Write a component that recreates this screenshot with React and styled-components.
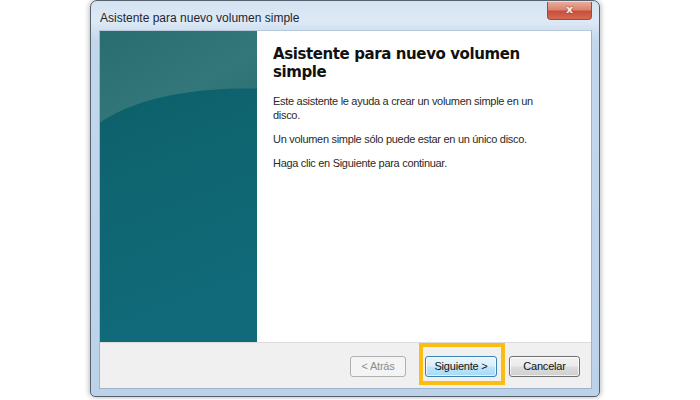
import React from "react";
import styled, { createGlobalStyle } from "styled-components";

const GlobalStyle = createGlobalStyle`
  html, body {
    margin: 0;
    padding: 0;
    background: #ffffff;
  }
  body {
    font-family: "Liberation Sans", Arial, sans-serif;
  }
`;

const Page = styled.div`
  width: 700px;
  height: 400px;
  padding-left: 90px;
  box-sizing: border-box;
  overflow: hidden;
`;

const Window = styled.div`
  width: 510px;
  height: 397px;
  box-sizing: border-box;
  border: 1px solid #56616d;
  border-radius: 7px 7px 5px 5px;
  background: linear-gradient(180deg, #d4e3f2 0px, #dde9f5 20px, #c3d7ec 40px, #bcd2e9 100%);
  box-shadow: -2px 0 4px rgba(0, 0, 0, 0.18), 2px 0 4px rgba(0, 0, 0, 0.18);
  padding: 0 7px 7px 8px;
  display: flex;
  flex-direction: column;
`;

const TitleBar = styled.div`
  height: 29px;
  display: flex;
  align-items: flex-start;
  flex-shrink: 0;
`;

const Title = styled.div`
  font-size: 12px;
  color: #1e2530;
  line-height: 14px;
  padding: 10px 0 0 1px;
`;

const CloseButton = styled.div`
  margin-left: auto;
  margin-top: 1px;
  width: 45px;
  height: 18px;
  box-sizing: border-box;
  border: 1px solid #9a4a3e;
  border-top: none;
  border-radius: 0 0 4px 4px;
  background: linear-gradient(180deg, #e8ab9b 0%, #dc8470 45%, #c9503b 55%, #d46a52 100%);
  color: #fbeeea;
  font-family: "DejaVu Sans", sans-serif;
  font-weight: bold;
  font-size: 11px;
  line-height: 15px;
  text-align: center;
  text-shadow: 0 0 2px rgba(120, 30, 20, 0.7);
`;

const Client = styled.div`
  flex: 1;
  display: flex;
  flex-direction: column;
  background: #ffffff;
  border: 1px solid #9eb4ca;
  border-top-color: #b7c9da;
  min-height: 0;
`;

const Main = styled.div`
  flex: 1;
  display: flex;
  min-height: 0;
`;

const SidePanel = styled.div`
  width: 157px;
  flex-shrink: 0;
  display: flex;
`;

const Content = styled.div`
  flex: 1;
  padding: 14px 16px 0 16px;
`;

const Heading = styled.h1`
  margin: 0;
  font-family: "DejaVu Sans", Verdana, sans-serif;
  font-weight: bold;
  font-size: 15px;
  letter-spacing: -0.4px;
  line-height: 18px;
  color: #111111;
  width: 270px;
`;

const Paragraph = styled.p`
  margin: ${(p) => (p.$first ? "13px" : "10px")} 0 0 0;
  font-size: 11px;
  letter-spacing: -0.3px;
  line-height: 14px;
  color: #2a2a2a;
  width: 270px;
`;

const Footer = styled.div`
  height: 46px;
  flex-shrink: 0;
  box-sizing: border-box;
  background: #f0f0f0;
  border-top: 1px solid #dcdcdc;
  display: flex;
  justify-content: flex-end;
  align-items: flex-end;
  padding: 0 11px 3px 0;
`;

const Button = styled.div`
  height: 21px;
  width: ${(p) => p.$w}px;
  box-sizing: border-box;
  border: 1px solid ${(p) => (p.$disabled ? "#adb2b5" : p.$focused ? "#3c7fb1" : "#707070")};
  border-radius: 3px;
  background: ${(p) =>
    p.$disabled
      ? "#f4f4f4"
      : p.$focused
      ? "linear-gradient(180deg, #eaf6fd 0%, #d9f0fc 48%, #bee6fd 52%, #a7d9f5 100%)"
      : "linear-gradient(180deg, #f2f2f2 0%, #ebebeb 48%, #dddddd 52%, #cfcfcf 100%)"};
  box-shadow: inset 0 0 0 1px ${(p) => (p.$disabled ? "#f4f4f4" : "rgba(255,255,255,0.7)")};
  color: ${(p) => (p.$disabled ? "#8d8d8d" : "#111111")};
  font-size: 11px;
  letter-spacing: -0.2px;
  line-height: 19px;
  text-align: center;
  margin-bottom: ${(p) => (p.$inside ? 0 : 8)}px;
`;

const Highlight = styled.div`
  border: 4px solid #fbbd14;
  padding: 9px 4px 4px 2px;
  margin: 0 4px 0 13px;
`;

function TealArt() {
  return (
    <svg width="100%" height="100%" viewBox="0 0 157 313" preserveAspectRatio="none">
      <defs>
        <linearGradient id="low" x1="0" y1="0" x2="0.2" y2="1">
          <stop offset="0" stopColor="#0b5c66" />
          <stop offset="0.5" stopColor="#0f6570" />
          <stop offset="1" stopColor="#116a7a" />
        </linearGradient>
        <linearGradient id="up" x1="0" y1="0" x2="1" y2="1">
          <stop offset="0" stopColor="#296d70" />
          <stop offset="0.6" stopColor="#33777a" />
          <stop offset="1" stopColor="#296e71" />
        </linearGradient>
      </defs>
      <rect x="0" y="0" width="157" height="313" fill="url(#low)" />
      <path d="M0 0 H157 V58 C110 57 45 62 0 92 Z" fill="url(#up)" />
    </svg>
  );
}

export default function App() {
  return (
    <Page>
      <GlobalStyle />
      <Window>
        <TitleBar>
          <Title>Asistente para nuevo volumen simple</Title>
          <CloseButton>x</CloseButton>
        </TitleBar>
        <Client>
          <Main>
            <SidePanel>
              <TealArt />
            </SidePanel>
            <Content>
              <Heading>Asistente para nuevo volumen simple</Heading>
              <Paragraph $first>
                Este asistente le ayuda a crear un volumen simple en un disco.
              </Paragraph>
              <Paragraph>Un volumen simple sólo puede estar en un único disco.</Paragraph>
              <Paragraph>Haga clic en Siguiente para continuar.</Paragraph>
            </Content>
          </Main>
          <Footer>
            <Button $w={56} $disabled>
              &lt; Atrás
            </Button>
            <Highlight>
              <Button $w={72} $focused $inside>
                Siguiente &gt;
              </Button>
            </Highlight>
            <Button $w={71}>Cancelar</Button>
          </Footer>
        </Client>
      </Window>
    </Page>
  );
}
